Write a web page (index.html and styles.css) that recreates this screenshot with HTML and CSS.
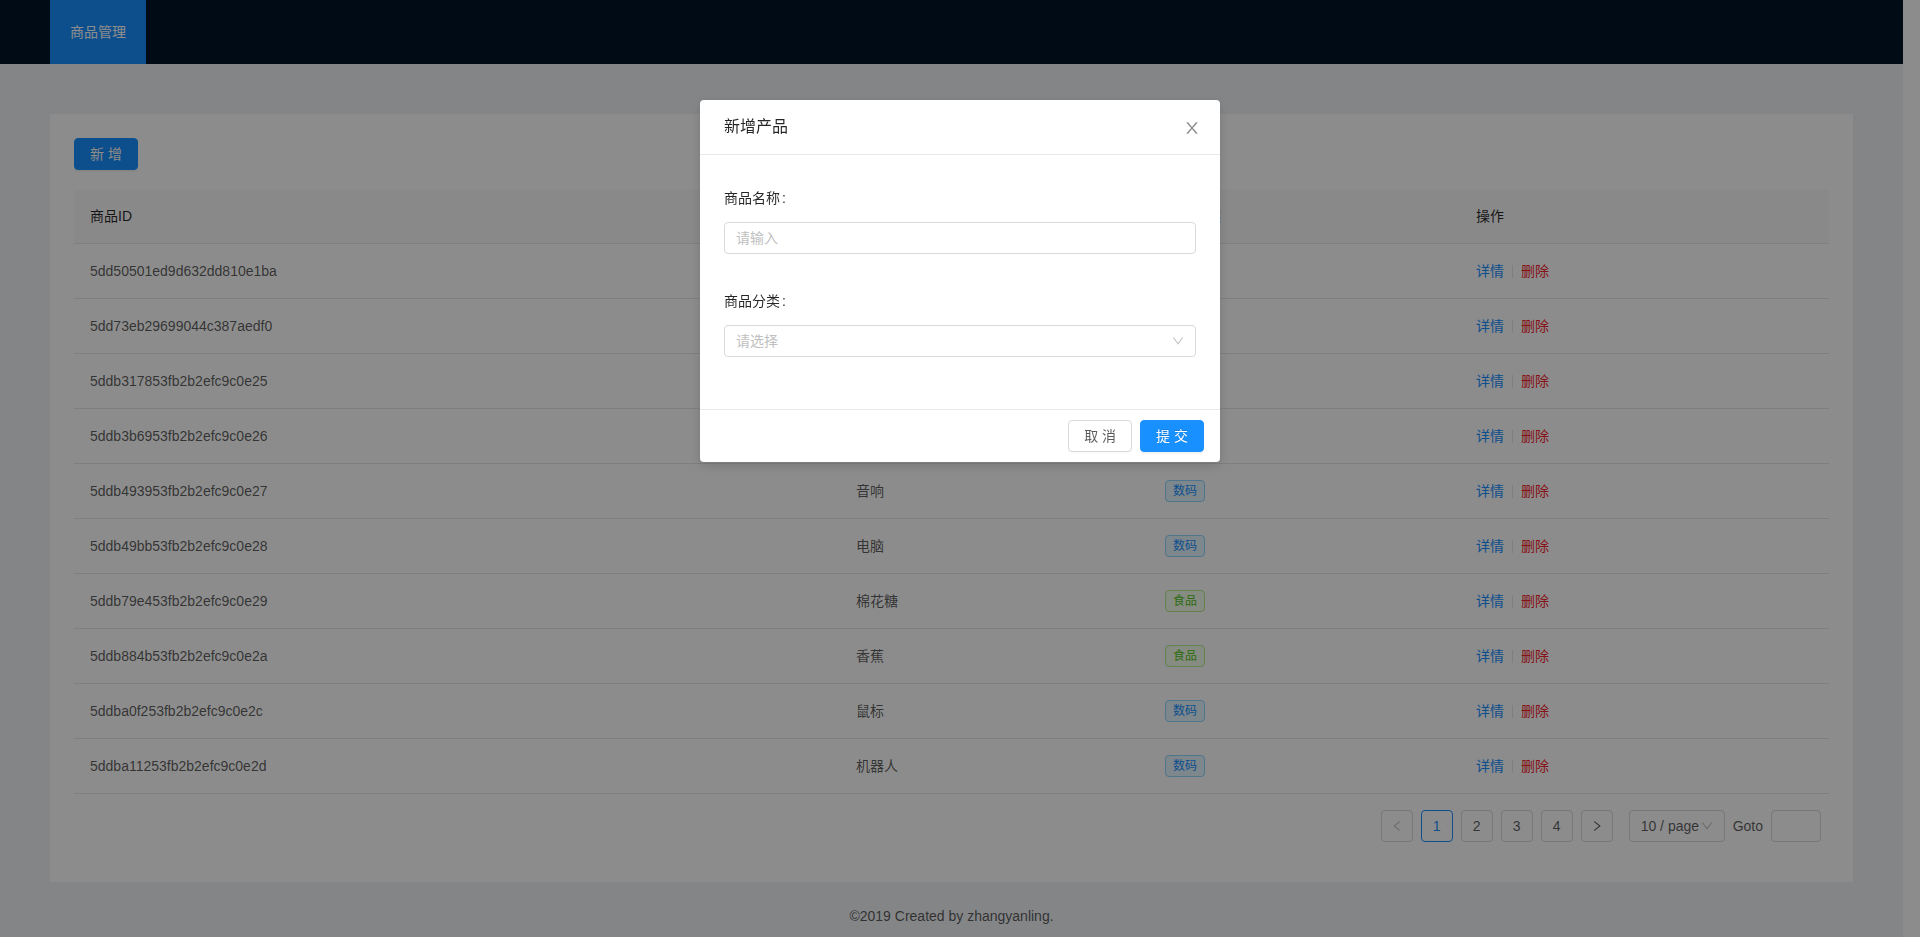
FILE: index.html
```html
<!DOCTYPE html>
<html lang="zh-CN">
<head>
<meta charset="utf-8">
<title>商品管理</title>
<link rel="stylesheet" href="styles.css">
</head>
<body>
<div class="layout">
  <header class="header">
    <ul class="menu">
      <li class="menu-item selected">商品管理</li>
    </ul>
  </header>
  <main class="content">
    <div class="card">
      <div class="toolbar">
        <button class="btn btn-primary">新 增</button>
      </div>
      <table class="table">
        <colgroup>
          <col class="c-id"><col class="c-name"><col class="c-cat"><col class="c-op">
        </colgroup>
        <thead>
          <tr><th>商品ID</th><th>商品名称</th><th>商品分类</th><th>操作</th></tr>
        </thead>
        <tbody>
          <tr><td>5dd50501ed9d632dd810e1ba</td><td>手机</td><td><span class="tag tag-blue">数码</span></td><td><a class="link">详情</a><i class="divider"></i><a class="link danger">删除</a></td></tr>
          <tr><td>5dd73eb29699044c387aedf0</td><td>平板</td><td><span class="tag tag-blue">数码</span></td><td><a class="link">详情</a><i class="divider"></i><a class="link danger">删除</a></td></tr>
          <tr><td>5ddb317853fb2b2efc9c0e25</td><td>耳机</td><td><span class="tag tag-blue">数码</span></td><td><a class="link">详情</a><i class="divider"></i><a class="link danger">删除</a></td></tr>
          <tr><td>5ddb3b6953fb2b2efc9c0e26</td><td>相机</td><td><span class="tag tag-blue">数码</span></td><td><a class="link">详情</a><i class="divider"></i><a class="link danger">删除</a></td></tr>
          <tr><td>5ddb493953fb2b2efc9c0e27</td><td>音响</td><td><span class="tag tag-blue">数码</span></td><td><a class="link">详情</a><i class="divider"></i><a class="link danger">删除</a></td></tr>
          <tr><td>5ddb49bb53fb2b2efc9c0e28</td><td>电脑</td><td><span class="tag tag-blue">数码</span></td><td><a class="link">详情</a><i class="divider"></i><a class="link danger">删除</a></td></tr>
          <tr><td>5ddb79e453fb2b2efc9c0e29</td><td>棉花糖</td><td><span class="tag tag-green">食品</span></td><td><a class="link">详情</a><i class="divider"></i><a class="link danger">删除</a></td></tr>
          <tr><td>5ddb884b53fb2b2efc9c0e2a</td><td>香蕉</td><td><span class="tag tag-green">食品</span></td><td><a class="link">详情</a><i class="divider"></i><a class="link danger">删除</a></td></tr>
          <tr><td>5ddba0f253fb2b2efc9c0e2c</td><td>鼠标</td><td><span class="tag tag-blue">数码</span></td><td><a class="link">详情</a><i class="divider"></i><a class="link danger">删除</a></td></tr>
          <tr><td>5ddba11253fb2b2efc9c0e2d</td><td>机器人</td><td><span class="tag tag-blue">数码</span></td><td><a class="link">详情</a><i class="divider"></i><a class="link danger">删除</a></td></tr>
        </tbody>
      </table>
      <ul class="pagination">
        <li class="page-item disabled"><svg class="pg-icon" viewBox="64 64 896 896"><path d="M724 218.3V141c0-6.7-7.7-10.4-12.9-6.3L260.3 486.8a31.860 31.860 0 0 0 0 50.3l450.8 352.1c5.3 4.1 12.9.4 12.9-6.300v-77.3c0-4.9-2.3-9.6-6.1-12.6l-360-281 360-281.1c3.8-3 6.1-7.7 6.1-12.6z"/></svg></li>
        <li class="page-item active">1</li>
        <li class="page-item">2</li>
        <li class="page-item">3</li>
        <li class="page-item">4</li>
        <li class="page-item next"><svg class="pg-icon" viewBox="64 64 896 896"><path d="M765.7 486.8L314.9 134.7A7.970 7.970 0 0 0 302 141v77.3c0 4.9 2.3 9.6 6.1 12.6l360 281.1-360 281.1c-3.8 3-6.1 7.7-6.1 12.6V883c0 6.6 7.6 10.3 12.9 6.3l450.8-352.1a31.960 31.960 0 0 0 0-50.4z"/></svg></li>
        <li class="options">
          <div class="size-changer"><span class="size-text">10 / page</span><svg class="arrow" viewBox="64 64 896 896"><path d="M884 256h-75c-5.1 0-9.9 2.5-12.9 6.6L512 654.2 227.9 262.6c-3-4.1-7.8-6.6-12.9-6.6h-75c-6.5 0-10.3 7.4-6.5 12.7l352.6 486.1c12.8 17.6 39 17.6 51.7 0l352.6-486.1c3.9-5.3.1-12.7-6.4-12.7z"/></svg></div>
          <div class="jumper">Goto<span class="jump-input"></span></div>
        </li>
      </ul>
    </div>
  </main>
  <footer class="footer">©2019 Created by zhangyanling.</footer>
</div>

<div class="mask"></div>
<div class="modal-wrap">
  <div class="modal">
    <div class="modal-header">
      <div class="modal-title">新增产品</div>
      <button class="modal-close"><svg viewBox="64 64 896 896"><path d="M563.8 512l262.5-312.9c4.4-5.2.7-13.1-6.1-13.1h-79.8c-4.7 0-9.2 2.1-12.3 5.7L511.6 449.8 295.1 191.7c-3-3.6-7.5-5.7-12.3-5.7H203c-6.8 0-10.5 7.9-6.1 13.1L459.4 512 196.9 824.9A7.950 7.950 0 0 0 203 838h79.8c4.7 0 9.2-2.1 12.3-5.7l216.5-258.1 216.5 258.1c3 3.6 7.5 5.7 12.3 5.7h79.8c6.8 0 10.5-7.9 6.1-13.1L563.8 512z"/></svg></button>
    </div>
    <div class="modal-body">
      <div class="form-item">
        <label class="form-label">商品名称</label>
        <div class="form-control"><div class="input"><span class="placeholder">请输入</span></div></div>
      </div>
      <div class="form-item">
        <label class="form-label">商品分类</label>
        <div class="form-control"><div class="input select"><span class="placeholder">请选择</span><svg class="arrow" viewBox="64 64 896 896"><path d="M884 256h-75c-5.1 0-9.9 2.5-12.9 6.6L512 654.2 227.9 262.6c-3-4.1-7.8-6.6-12.9-6.6h-75c-6.5 0-10.3 7.4-6.5 12.7l352.6 486.1c12.8 17.6 39 17.6 51.7 0l352.6-486.1c3.9-5.3.1-12.7-6.4-12.7z"/></svg></div></div>
      </div>
    </div>
    <div class="modal-footer">
      <button class="btn">取 消</button>
      <button class="btn btn-primary">提 交</button>
    </div>
  </div>
</div>
</body>
</html>
```

FILE: styles.css
```css
* { box-sizing: border-box; }
html {
  height: 100%;
  background: #fff;
  overflow: hidden;
}
body {
  margin: 0;
  width: calc(100% - 17px);
  height: 100%;
  overflow: hidden;
  font-family: "Liberation Sans", "Noto Sans CJK SC", sans-serif;
  font-size: 14px;
  line-height: 1.5;
  color: rgba(0, 0, 0, 0.65);
}
.layout {
  min-height: 100%;
  background: #f0f2f5;
  display: flex;
  flex-direction: column;
}
.header {
  height: 64px;
  padding: 0 50px;
  background: #001529;
  flex: none;
}
.menu {
  list-style: none;
  margin: 0;
  padding: 0;
  display: flex;
  height: 64px;
}
.menu-item {
  padding: 0 20px;
  line-height: 64px;
  color: rgba(255, 255, 255, 0.65);
}
.menu-item.selected {
  background: #1890ff;
  color: #fff;
}
.content {
  padding: 50px 50px 0;
  flex: 1 0 auto;
}
.card {
  background: #fff;
  padding: 24px;
}
.toolbar {
  margin-bottom: 20px;
  display: flex;
}
.btn {
  height: 32px;
  padding: 0 15px;
  font-family: inherit;
  font-size: 14px;
  line-height: 30px;
  border-radius: 4px;
  border: 1px solid #d9d9d9;
  background: #fff;
  color: rgba(0, 0, 0, 0.65);
  box-shadow: 0 2px 0 rgba(0, 0, 0, 0.015);
  cursor: pointer;
}
.btn-primary {
  background: #1890ff;
  border-color: #1890ff;
  color: #fff;
  text-shadow: 0 -1px 0 rgba(0, 0, 0, 0.12);
  box-shadow: 0 2px 0 rgba(0, 0, 0, 0.045);
}
.table {
  width: 100%;
  table-layout: fixed;
  border-collapse: separate;
  border-spacing: 0;
}
.c-id { width: 766px; }
.c-name { width: 309px; }
.c-cat { width: 311px; }
.c-op { width: 369px; }
.table th {
  background: #fafafa;
  color: rgba(0, 0, 0, 0.85);
  font-weight: 400;
  text-align: left;
  padding: 16px;
  line-height: 21px;
  border-bottom: 1px solid #e8e8e8;
}
.table td {
  padding: 16px;
  line-height: 22px;
  vertical-align: top;
  border-bottom: 1px solid #e8e8e8;
}
.tag {
  display: inline-block;
  vertical-align: top;
  padding: 0 7px;
  font-size: 12px;
  line-height: 20px;
  border-radius: 4px;
  border: 1px solid;
}
.tag-blue { color: #1890ff; background: #e6f7ff; border-color: #91d5ff; }
.tag-green { color: #52c41a; background: #f6ffed; border-color: #b7eb8f; }
.link { color: #1890ff; cursor: pointer; }
.link.danger { color: #f5222d; }
.divider {
  display: inline-block;
  width: 1px;
  height: 0.9em;
  margin: 0 8px;
  background: #e8e8e8;
  vertical-align: middle;
  position: relative;
  top: -0.06em;
}
.pagination {
  list-style: none;
  margin: 16px 0;
  padding: 0;
  display: flex;
  justify-content: flex-end;
  align-items: center;
}
.page-item {
  min-width: 32px;
  height: 32px;
  margin-right: 8px;
  border: 1px solid #d9d9d9;
  border-radius: 4px;
  background: #fff;
  display: flex;
  align-items: center;
  justify-content: center;
  line-height: 30px;
  color: rgba(0, 0, 0, 0.65);
}
.page-item.next { margin-right: 0; }
.page-item.active {
  border-color: #1890ff;
  color: #1890ff;
}
.pg-icon {
  width: 12px;
  height: 12px;
  fill: rgba(0, 0, 0, 0.65);
}
.page-item.disabled .pg-icon { fill: rgba(0, 0, 0, 0.25); }
.options {
  margin-left: 16px;
  display: flex;
  align-items: center;
}
.size-changer {
  width: 96px;
  height: 32px;
  margin-right: 8px;
  border: 1px solid #d9d9d9;
  border-radius: 4px;
  display: flex;
  align-items: center;
  padding: 0 11px;
  position: relative;
}
.size-text {
  color: rgba(0, 0, 0, 0.65);
  white-space: nowrap;
}
.arrow {
  width: 12px;
  height: 12px;
  fill: rgba(0, 0, 0, 0.25);
  position: absolute;
  right: 11px;
  top: 50%;
  margin-top: -6px;
}
.jumper {
  display: flex;
  align-items: center;
  height: 32px;
  color: rgba(0, 0, 0, 0.65);
}
.jump-input {
  width: 50px;
  height: 32px;
  margin: 0 8px;
  border: 1px solid #d9d9d9;
  border-radius: 4px;
  background: #fff;
}
.footer {
  text-align: center;
  padding: 24px 50px;
  flex: none;
}
.mask {
  position: fixed;
  top: 0; left: 0;
  width: 100vw;
  height: 100vh;
  background: rgba(0, 0, 0, 0.45);
  z-index: 1000;
}
.modal-wrap {
  position: fixed;
  top: 0; left: 0;
  width: 100vw;
  height: 100vh;
  z-index: 1001;
  display: flex;
  justify-content: center;
  align-items: flex-start;
}
.modal {
  width: 520px;
  margin-top: 100px;
  background: #fff;
  border-radius: 4px;
  box-shadow: 0 4px 12px rgba(0, 0, 0, 0.15);
  position: relative;
}
.modal-header {
  padding: 16px 24px;
  border-bottom: 1px solid #e8e8e8;
  border-radius: 4px 4px 0 0;
}
.modal-title {
  font-size: 16px;
  line-height: 22px;
  font-weight: 400;
  color: rgba(0, 0, 0, 0.85);
}
.modal-close {
  position: absolute;
  top: 0;
  right: 0;
  width: 56px;
  height: 56px;
  border: 0;
  background: transparent;
  padding: 0;
  display: flex;
  align-items: center;
  justify-content: center;
  cursor: pointer;
}
.modal-close svg {
  width: 16px;
  height: 16px;
  fill: rgba(0, 0, 0, 0.45);
}
.modal-body {
  padding: 24px;
}
.form-item {
  margin-bottom: 24px;
}
.form-label {
  display: block;
  line-height: 39px;
  color: rgba(0, 0, 0, 0.85);
}
.form-label::after {
  content: ":";
  margin: 0 8px 0 2px;
}
.form-control {
  padding: 4px 0;
}
.input {
  height: 32px;
  padding: 4px 11px;
  border: 1px solid #d9d9d9;
  border-radius: 4px;
  background: #fff;
  line-height: 22px;
  position: relative;
}
.placeholder { color: #bfbfbf; }
.modal-footer {
  padding: 10px 16px;
  border-top: 1px solid #e8e8e8;
  display: flex;
  justify-content: flex-end;
  gap: 8px;
}
```
